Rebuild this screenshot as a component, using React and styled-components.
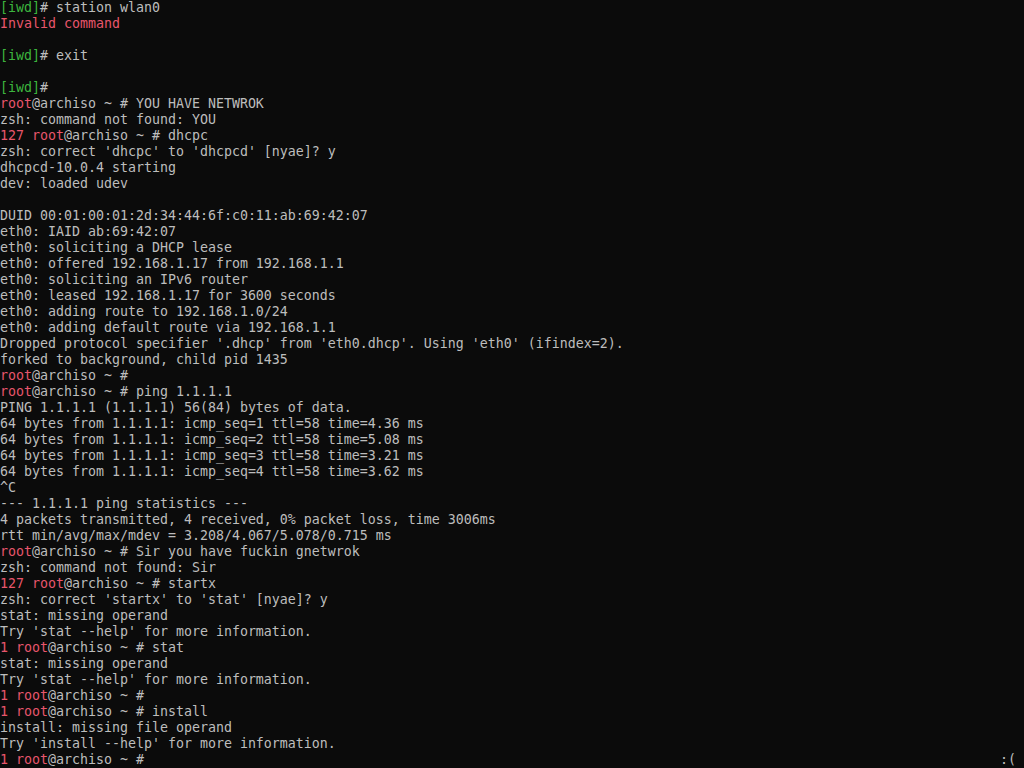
import styled, { createGlobalStyle } from 'styled-components'

const Global = createGlobalStyle`
  html, body {
    margin: 0;
    padding: 0;
    background: #0b0b0b;
  }
`

const Screen = styled.div`
  display: flex;
  flex-direction: column;
  width: 1024px;
  height: 768px;
  overflow: hidden;
  background: #0b0b0b;
  color: #bdbdbd;
  font-family: "DejaVu Sans Mono", "Liberation Mono", monospace;
  font-size: 13.29px;
  line-height: 16px;
`

const Line = styled.div`
  display: flex;
  justify-content: space-between;
  height: 16px;
  padding-right: 8px;
  white-space: pre;
`

const Seg = styled.span`
  color: ${(p) => (p.$c === 'red' ? '#e8566c' : p.$c === 'green' ? '#3cb43e' : '#bdbdbd')};
`

const iwd = (rest) => [['green', '[iwd]'], ['', '# ' + rest]]
const root = (pre, cmd) => [['red', pre + 'root'], ['', '@archiso ~ # ' + cmd]]
const plain = (t) => [['', t]]

const lines = [
  [['green', '[iwd]'], ['', '# station wlan0']],
  [['red', 'Invalid command']],
  plain(''),
  iwd('exit'),
  plain(''),
  [['green', '[iwd]'], ['', '#']],
  root('', 'YOU HAVE NETWROK'),
  plain('zsh: command not found: YOU'),
  root('127 ', 'dhcpc'),
  plain("zsh: correct 'dhcpc' to 'dhcpcd' [nyae]? y"),
  plain('dhcpcd-10.0.4 starting'),
  plain('dev: loaded udev'),
  plain(''),
  plain('DUID 00:01:00:01:2d:34:44:6f:c0:11:ab:69:42:07'),
  plain('eth0: IAID ab:69:42:07'),
  plain('eth0: soliciting a DHCP lease'),
  plain('eth0: offered 192.168.1.17 from 192.168.1.1'),
  plain('eth0: soliciting an IPv6 router'),
  plain('eth0: leased 192.168.1.17 for 3600 seconds'),
  plain('eth0: adding route to 192.168.1.0/24'),
  plain('eth0: adding default route via 192.168.1.1'),
  plain("Dropped protocol specifier '.dhcp' from 'eth0.dhcp'. Using 'eth0' (ifindex=2)."),
  plain('forked to background, child pid 1435'),
  root('', ''),
  root('', 'ping 1.1.1.1'),
  plain('PING 1.1.1.1 (1.1.1.1) 56(84) bytes of data.'),
  plain('64 bytes from 1.1.1.1: icmp_seq=1 ttl=58 time=4.36 ms'),
  plain('64 bytes from 1.1.1.1: icmp_seq=2 ttl=58 time=5.08 ms'),
  plain('64 bytes from 1.1.1.1: icmp_seq=3 ttl=58 time=3.21 ms'),
  plain('64 bytes from 1.1.1.1: icmp_seq=4 ttl=58 time=3.62 ms'),
  plain('^C'),
  plain('--- 1.1.1.1 ping statistics ---'),
  plain('4 packets transmitted, 4 received, 0% packet loss, time 3006ms'),
  plain('rtt min/avg/max/mdev = 3.208/4.067/5.078/0.715 ms'),
  root('', 'Sir you have fuckin gnetwrok'),
  plain('zsh: command not found: Sir'),
  root('127 ', 'startx'),
  plain("zsh: correct 'startx' to 'stat' [nyae]? y"),
  plain('stat: missing operand'),
  plain("Try 'stat --help' for more information."),
  root('1 ', 'stat'),
  plain('stat: missing operand'),
  plain("Try 'stat --help' for more information."),
  root('1 ', ''),
  root('1 ', 'install'),
  plain('install: missing file operand'),
  plain("Try 'install --help' for more information."),
]

export default function App() {
  return (
    <Screen>
      <Global />
      {lines.map((segs, i) => (
        <Line key={i}>
          <span>
            {segs.map(([c, t], j) => (
              <Seg key={j} $c={c}>{t}</Seg>
            ))}
          </span>
        </Line>
      ))}
      <Line>
        <span>
          <Seg $c="red">1 root</Seg>
          <Seg>@archiso ~ #</Seg>
        </span>
        <Seg>:(</Seg>
      </Line>
    </Screen>
  )
}
